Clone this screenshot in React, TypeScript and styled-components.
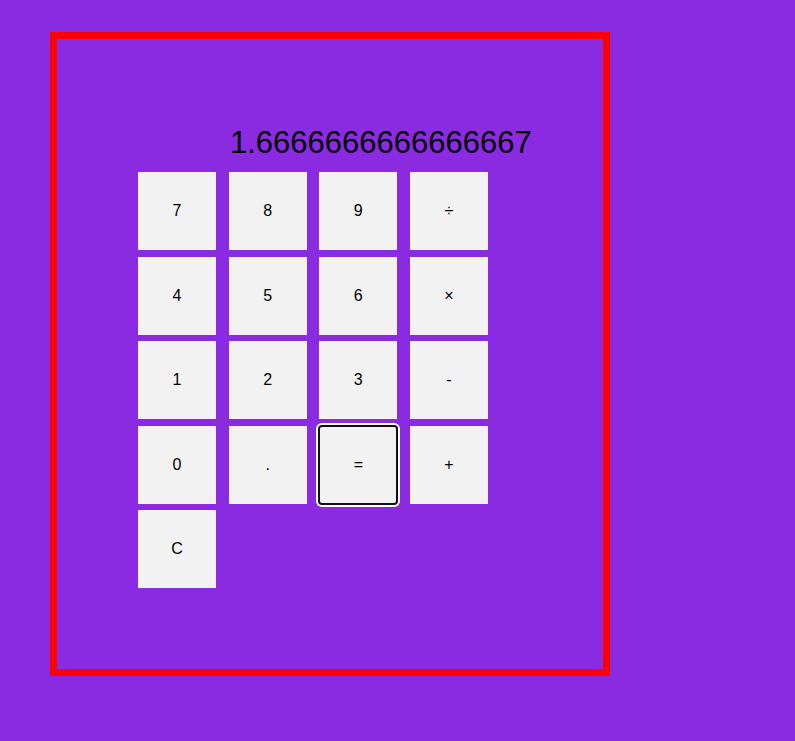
import React from "react";
import styled, { createGlobalStyle } from "styled-components";

const GlobalStyle = createGlobalStyle`
  html, body {
    margin: 0;
    padding: 0;
    background: #8a2be2;
    font-family: "Liberation Sans", Arial, sans-serif;
  }
`;

const Page = styled.div`
  min-height: 741px;
  background: #8a2be2;
  padding: 32px 0 0 50px;
  box-sizing: border-box;
`;

const Frame = styled.div`
  box-sizing: border-box;
  width: 560px;
  height: 644px;
  border: 7px solid #ff0000;
  padding: 86px 0 0 81px;
  display: flex;
  flex-direction: column;
`;

const Display = styled.div`
  margin: 0 0 11px 92px;
  font-size: 31px;
  line-height: 36px;
  color: #000;
  white-space: nowrap;
`;

const Keys = styled.div`
  display: grid;
  grid-template-columns: repeat(4, 78px);
  grid-auto-rows: 78px;
  column-gap: 12.67px;
  row-gap: 6.5px;
`;

const Key = styled.button<{ $focused?: boolean }>`
  box-sizing: border-box;
  width: 78px;
  height: 78px;
  border: none;
  padding: 0;
  margin: 0;
  background: #f2f2f2;
  color: #000;
  font-family: "Liberation Sans", Arial, sans-serif;
  font-size: 16px;
  cursor: pointer;
  border-radius: ${(p) => (p.$focused ? "3px" : "0")};
  outline: ${(p) => (p.$focused ? "2px solid #101010" : "none")};
  outline-offset: -1px;
  box-shadow: ${(p) => (p.$focused ? "0 0 0 3px #ffffff" : "none")};
`;

const keys = ["7", "8", "9", "÷", "4", "5", "6", "×", "1", "2", "3", "-", "0", ".", "=", "+", "C"];

export default function App() {
  return (
    <>
      <GlobalStyle />
      <Page>
        <Frame>
          <Display>1.6666666666666667</Display>
          <Keys>
            {keys.map((k) => (
              <Key key={k} $focused={k === "="}>
                {k}
              </Key>
            ))}
          </Keys>
        </Frame>
      </Page>
    </>
  );
}
